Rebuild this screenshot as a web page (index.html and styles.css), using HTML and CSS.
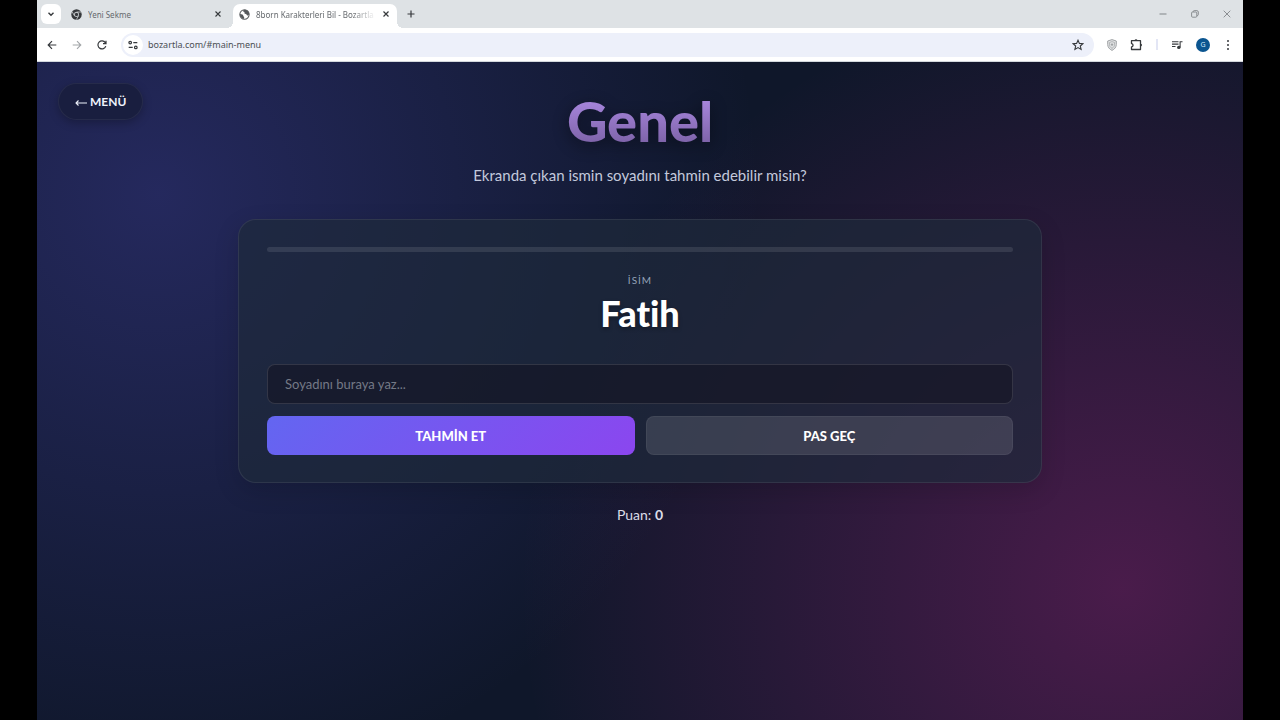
FILE: index.html
```html
<!DOCTYPE html>
<html lang="tr">
<head>
<meta charset="utf-8">
<meta name="viewport" content="width=device-width, initial-scale=1">
<title>8born Karakterleri Bil - Bozartla</title>
<link rel="stylesheet" href="styles.css">
</head>
<body>
<div class="window">
  <header class="chrome">
    <div class="tabstrip">
      <button class="icon-btn tab-search" aria-label="Sekme ara"><svg width="10" height="10" viewBox="0 0 10 10"><path d="M2.5 3.8 5 6.3l2.5-2.5" fill="none" stroke="currentColor" stroke-width="1.4"/></svg></button>
      <div class="tab">
        <svg width="11" height="11" viewBox="0 0 12 12"><circle cx="6" cy="6" r="5.7" fill="#35383b"/><path d="M6 3.3h5M3.7 7.3 1.3 3.1M8.3 7.3 5.9 11.5" stroke="#dee2e5" stroke-width=".8"/><circle cx="6" cy="6" r="2.7" fill="#dee2e5"/><circle cx="6" cy="6" r="1.8" fill="#35383b"/></svg>
        <span class="tab-title">Yeni Sekme</span>
        <button class="icon-btn" aria-label="Sekmeyi kapat"><svg width="8" height="8" viewBox="0 0 8 8"><path d="m1.5 1.5 5 5m0-5-5 5" stroke="currentColor" stroke-width="1.1"/></svg></button>
      </div>
      <div class="tab tab-active">
        <svg width="11" height="11" viewBox="0 0 12 12"><circle cx="6" cy="6" r="5.1" fill="#fff" stroke="#55585b" stroke-width="1.1"/><path d="M1 5.3c1.3.8 2.5.4 3.4 1.2.6.7-.1 1.3.8 1.8.7.4.5 1.5.2 2.5C2.8 10.3.8 8.5 1 5.3zM4 1.5l3-.6c1.8.3 3.6 1.6 4.1 4-.2 1.5-.9 2.4-1.8 2.3-1-.2-.8-1.6-1.9-1.800C6.200 5.200 5.500 4.700 6 3.900c.3-.5-.6-.8-1.100-.9z" fill="#55585b"/></svg>
        <span class="tab-title tab-fade">8born Karakterleri Bil - Bozartla</span>
        <button class="icon-btn" aria-label="Sekmeyi kapat"><svg width="8" height="8" viewBox="0 0 8 8"><path d="m1.5 1.5 5 5m0-5-5 5" stroke="currentColor" stroke-width="1.2"/></svg></button>
      </div>
      <button class="icon-btn new-tab" aria-label="Yeni sekme"><svg width="10" height="10" viewBox="0 0 10 10"><path d="M5 1.500v7M1.500 5h7" stroke="currentColor" stroke-width="1.200"/></svg></button>
      <div class="window-controls">
        <button class="icon-btn" aria-label="Küçült"><svg width="8" height="8" viewBox="0 0 8 8"><path d="M.5 4h7" stroke="currentColor"/></svg></button>
        <button class="icon-btn" aria-label="Önceki boyut"><svg width="8" height="8" viewBox="0 0 8 8" fill="none" stroke="currentColor" stroke-width=".9"><rect x=".6" y="2" width="5.200" height="5.200" rx="1"/><path d="M2.200 1.900V1.600c0-.6.4-1 1-1h2.700c.8 0 1.400.6 1.400 1.400v2.600c0 .6-.4 1-1 1H6"/></svg></button>
        <button class="icon-btn" aria-label="Kapat"><svg width="8" height="8" viewBox="0 0 8 8"><path d="m.7.7 6.600 6.600m0-6.600L.7 7.300" stroke="currentColor" stroke-width=".9"/></svg></button>
      </div>
    </div>
    <div class="toolbar">
      <button class="icon-btn" aria-label="Geri"><svg width="10" height="10" viewBox="0 0 10 10" fill="none" stroke="currentColor" stroke-width="1.200"><path d="M9.300 5H1.300M5 1.200 1.200 5 5 8.800"/></svg></button>
      <button class="icon-btn muted" aria-label="İleri"><svg width="10" height="10" viewBox="0 0 10 10" fill="none" stroke="currentColor" stroke-width="1.100"><path d="M.7 5h8M5 1.200 8.800 5 5 8.800"/></svg></button>
      <button class="icon-btn" aria-label="Yenile"><svg width="10" height="10" viewBox="0 0 10 10" fill="none" stroke="currentColor" stroke-width="1.200"><path d="M8.800 6.100A4 4 0 1 1 8.300 2.700L9 3.600M9 .7v3H6"/></svg></button>
      <div class="omnibox">
        <button class="icon-btn site-info" aria-label="Site bilgileri"><svg width="10" height="10" viewBox="0 0 10 10" fill="none" stroke="currentColor" stroke-width="1.200"><circle cx="2.200" cy="2.600" r="1.300"/><path d="M5.300 2.600h4M.7 7.400h4"/><circle cx="7.800" cy="7.400" r="1.300"/></svg></button>
        <input class="address" type="text" value="bozartla.com/#main-menu" aria-label="Adres çubuğu">
        <button class="icon-btn" aria-label="Yer işareti ekle"><svg width="12" height="12" viewBox="0 0 12 12"><path d="m6 1.200 1.400 3.200 3.500.3-2.600 2.300.8 3.400L6 8.600l-3.100 1.800.8-3.400L1.100 4.700l3.500-.3z" fill="none" stroke="currentColor" stroke-width="1.100"/></svg></button>
      </div>
      <div class="actions">
        <button class="icon-btn shield" aria-label="Koruma"><svg width="10" height="12" viewBox="0 0 10 12"><path d="M5 .6 9.300 2v3.500c0 2.600-1.700 4.700-4.300 5.900C2.400 10.200.7 8.100.7 5.500V2z" fill="#e0e2e3" stroke="currentColor"/><path d="M5 2.600 7.500 3.500v2.200c0 1.500-.9 2.800-2.500 3.700-1.600-.9-2.500-2.200-2.500-3.700V3.500z" fill="none" stroke="currentColor" stroke-width=".7"/><circle cx="5" cy="5.600" r="1.200" fill="currentColor"/></svg></button>
        <button class="icon-btn" aria-label="Uzantılar"><svg width="13" height="13" viewBox="0 0 13 13"><path d="M1.500 2.700h9v8.800h-9V8.900c2 0 2-3.300 0-3.300z" fill="none" stroke="currentColor" stroke-width="1.300" stroke-linejoin="round"/><path d="M4.600 2.600a1.400 1.400 0 0 1 2.800 0zM10.600 5.700a1.400 1.400 0 0 1 0 2.800z" fill="currentColor"/></svg></button>
        <span class="divider"></span>
        <button class="icon-btn" aria-label="Medya"><svg width="12" height="12" viewBox="0 0 12 12"><path d="M1 2.700h6.500M1 5.100h6.500M1 7.500h3.500M9.100 8.400V2.700h2.400" fill="none" stroke="currentColor" stroke-width="1.100"/><circle cx="7.800" cy="8.400" r="1.700" fill="currentColor"/></svg></button>
        <button class="avatar" aria-label="Profil">G</button>
        <button class="icon-btn" aria-label="Menü"><svg width="10" height="12" viewBox="0 0 10 12" fill="currentColor"><circle cx="5" cy="2" r="1"/><circle cx="5" cy="6" r="1"/><circle cx="5" cy="10" r="1"/></svg></button>
      </div>
    </div>
  </header>

  <main class="page">
    <button class="menu-btn"><svg width="12" height="8" viewBox="0 0 12 8" fill="none" stroke="currentColor" stroke-width="1.100"><path d="M12 5H1M3.500 2.500 1 5l2.500 2.500"/></svg>MENÜ</button>
    <h1 class="title">Genel</h1>
    <p class="subtitle">Ekranda çıkan ismin soyadını tahmin edebilir misin?</p>
    <form class="card">
      <div class="progress"></div>
      <p class="label">İSİM</p>
      <h2 class="name">Fatih</h2>
      <input class="guess" type="text" placeholder="Soyadını buraya yaz..." aria-label="Soyadı">
      <div class="buttons">
        <button class="btn btn-primary" type="button">TAHMİN ET</button>
        <button class="btn btn-secondary" type="button">PAS GEÇ</button>
      </div>
    </form>
    <p class="score">Puan: <strong>0</strong></p>
  </main>
</div>
</body>
</html>
```
FILE: styles.css
```css
* { box-sizing: border-box; }

body {
  margin: 0;
  background: #000;
  font-family: Lato, "Open Sans", sans-serif;
  font-variant-ligatures: none;
}

h1, h2, p { margin: 0; }

button, input { font: inherit; }

svg { display: block; flex: none; }

.window {
  display: flex;
  flex-direction: column;
  min-height: 100vh;
  margin: 0 37px;
}

/* Browser frame */
.chrome {
  background: #fff;
  border-bottom: 1px solid #d3d8dd;
  color: #3c4043;
  font-family: "Noto Sans", "Open Sans", sans-serif;
}

.icon-btn {
  display: flex;
  align-items: center;
  justify-content: center;
  flex: none;
  padding: 0;
  border: 0;
  background: none;
  color: #36393c;
}

.tabstrip {
  display: flex;
  align-items: center;
  height: 28px;
  padding: 0 12px 0 4px;
  background: #dee2e5;
}

.tab-search {
  width: 20px;
  height: 20px;
  border-radius: 6px;
  background: #fff;
}

.tab {
  display: flex;
  align-items: center;
  gap: 6px;
  width: 172px;
  height: 24px;
  padding: 0 11px 0 10px;
  font-size: 8px;
  color: #65696d;
}

.tab-title {
  flex: 1;
  overflow: hidden;
  white-space: nowrap;
}

.tab-active {
  position: relative;
  align-self: flex-end;
  width: 164px;
  padding: 0 7px 4px 6px;
  border-radius: 7px 7px 0 0;
  background: #fff;
}

.tab-active::before,
.tab-active::after {
  content: "";
  position: absolute;
  bottom: 0;
  width: 6px;
  height: 6px;
}

.tab-active::before {
  right: 100%;
  background: radial-gradient(circle at 0 0, transparent 6px, #fff 6px);
}

.tab-active::after {
  left: 100%;
  background: radial-gradient(circle at 100% 0, transparent 6px, #fff 6px);
}

.tab-fade {
  -webkit-mask-image: linear-gradient(90deg, #000 80%, transparent);
  mask-image: linear-gradient(90deg, #000 80%, transparent);
}

.new-tab { margin-left: 9px; }

.window-controls {
  display: flex;
  gap: 24px;
  margin-left: auto;
}

.window-controls .icon-btn { color: #808588; }

.toolbar {
  display: flex;
  align-items: center;
  gap: 15px;
  height: 33px;
  padding: 0 10px;
}

.muted { color: #a2a5a8; }

.omnibox {
  display: flex;
  align-items: center;
  flex: 1;
  gap: 5px;
  height: 24px;
  margin: 0 -2px 0 -1px;
  padding: 0 10px 0 2px;
  border-radius: 12px;
  background: #edf0fa;
}

.site-info {
  width: 20px;
  height: 20px;
  border-radius: 50%;
  background: #fff;
}

.address {
  flex: 1;
  min-width: 0;
  padding: 0;
  border: 0;
  outline: 0;
  background: none;
  color: #4b4f54;
  font-size: 9px;
}

.actions {
  display: flex;
  align-items: center;
  gap: 13px;
}

.shield { color: #a0a3a5; }

.divider {
  width: 2px;
  height: 11px;
  background: #e3e6f5;
}

.avatar {
  width: 14px;
  height: 14px;
  padding: 0;
  border: 0;
  border-radius: 50%;
  background: #0b5590;
  color: #cfe6f8;
  font-size: 7px;
  line-height: 14px;
  text-align: center;
}

/* Game page */
.page {
  position: relative;
  flex: 1;
  padding: 23px 24px;
  background:
    radial-gradient(circle at 10% 20%, rgba(99, 92, 241, 0.26) 0%, transparent 50%),
    radial-gradient(circle at 90% 80%, rgba(226, 40, 160, 0.28) 0%, transparent 50%),
    #0f172a;
  color: #c3c9dc;
  text-align: center;
}

.menu-btn {
  position: absolute;
  top: 21px;
  left: 21px;
  display: flex;
  align-items: center;
  gap: 3px;
  height: 37px;
  padding: 0 16px;
  border: 1px solid rgba(255, 255, 255, 0.06);
  border-radius: 19px;
  background: #191e3f;
  box-shadow: 0 3px 10px rgba(0, 0, 0, 0.25);
  color: #eef2fb;
  font-size: 12px;
  font-weight: 700;
}

.title {
  background: linear-gradient(180deg, #ab89e2 15%, #7b61a5 85%);
  -webkit-background-clip: text;
  background-clip: text;
  color: transparent;
  filter: drop-shadow(0 4px 8px rgba(0, 0, 0, 0.45));
  font-size: 56px;
  font-weight: 900;
  line-height: 72px;
}

.subtitle {
  margin-top: 8px;
  font-size: 15px;
  line-height: 20px;
}

.card {
  max-width: 804px;
  margin: 34px auto 0;
  padding: 27px 28px;
  border: 1px solid rgba(255, 255, 255, 0.08);
  border-radius: 18px;
  background: rgba(30, 41, 59, 0.7);
  box-shadow: 0 8px 24px rgba(0, 0, 0, 0.15);
}

.progress {
  height: 5px;
  border-radius: 3px;
  background: rgba(255, 255, 255, 0.1);
}

.label {
  margin-top: 21px;
  color: #94a3b8;
  font-size: 10px;
  line-height: 14px;
  letter-spacing: 1px;
}

.name {
  margin-top: 6px;
  color: #fff;
  font-size: 36px;
  font-weight: 900;
  line-height: 40px;
  text-shadow: 0 2px 4px rgba(0, 0, 0, 0.3);
}

.guess {
  display: block;
  width: 100%;
  height: 40px;
  margin-top: 31px;
  padding: 0 17px;
  border: 1px solid rgba(255, 255, 255, 0.12);
  border-radius: 8px;
  outline: 0;
  background: rgba(20, 20, 35, 0.6);
  color: #fff;
  font-size: 13px;
}

.guess::placeholder { color: #747986; opacity: 1; }

.buttons {
  display: grid;
  grid-template-columns: 1fr 1fr;
  gap: 11px;
  margin-top: 12px;
}

.btn {
  height: 39px;
  border: 1px solid transparent;
  border-radius: 8px;
  color: #fff;
  font-size: 13px;
  font-weight: 900;
}

.btn-primary {
  border: 0;
  background: linear-gradient(135deg, #6366f1, #8b46ef);
}

.btn-secondary {
  border-color: rgba(255, 255, 255, 0.05);
  background: rgba(255, 255, 255, 0.12);
}

.score {
  margin-top: 22px;
  color: #dcdde8;
  font-size: 14px;
  line-height: 20px;
}
```
